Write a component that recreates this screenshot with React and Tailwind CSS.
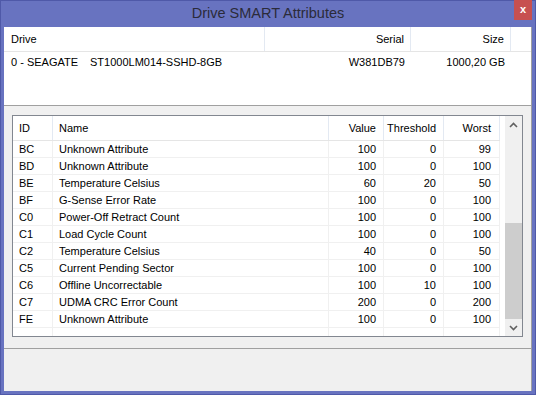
import React from "react";

const attributes = [
  { id: "BC", name: "Unknown Attribute", value: 100, threshold: 0, worst: 99 },
  { id: "BD", name: "Unknown Attribute", value: 100, threshold: 0, worst: 100 },
  { id: "BE", name: "Temperature Celsius", value: 60, threshold: 20, worst: 50 },
  { id: "BF", name: "G-Sense Error Rate", value: 100, threshold: 0, worst: 100 },
  { id: "C0", name: "Power-Off Retract Count", value: 100, threshold: 0, worst: 100 },
  { id: "C1", name: "Load Cycle Count", value: 100, threshold: 0, worst: 100 },
  { id: "C2", name: "Temperature Celsius", value: 40, threshold: 0, worst: 50 },
  { id: "C5", name: "Current Pending Sector", value: 100, threshold: 0, worst: 100 },
  { id: "C6", name: "Offline Uncorrectable", value: 100, threshold: 10, worst: 100 },
  { id: "C7", name: "UDMA CRC Error Count", value: 200, threshold: 0, worst: 200 },
  { id: "FE", name: "Unknown Attribute", value: 100, threshold: 0, worst: 100 },
];

const Chevron = ({ up }) => (
  <svg width="9" height="6" viewBox="0 0 9 6" className="text-[#606060]">
    <polyline
      points={up ? "1,5 4.5,1.5 8,5" : "1,1 4.5,4.5 8,1"}
      fill="none"
      stroke="currentColor"
      strokeWidth="1.6"
    />
  </svg>
);

const App = () => {
  return (
    <div
      className="w-[536px] h-[395px] bg-[#6873c0] border border-[#4f59a8] flex flex-col text-black"
      style={{ fontFamily: '"Liberation Sans", Arial, sans-serif' }}
    >
      {/* title bar */}
      <div className="h-[26px] relative flex items-center justify-center shrink-0">
        <span className="text-[14.5px] text-[#2b2b3a] -mt-[1px]">Drive SMART Attributes</span>
        <div className="absolute right-[3px] -top-[1px] w-[18px] h-[20px] bg-[#c75050] flex items-center justify-center">
          <span className="text-white text-[11px] font-bold leading-none -mt-[2px]">x</span>
        </div>
      </div>

      {/* client area */}
      <div className="flex-1 ml-[3px] mr-[3px] mb-[3px] bg-[#f0f0f0] border-r border-[#a0a0a0] flex flex-col text-[11px]">
        {/* drive list */}
        <div className="h-[79px] bg-white border-b border-[#a0a0a0] shrink-0">
          <div className="flex h-[25px] border-b border-[#e5e5e5]">
            <div className="w-[261px] pl-[7px] pt-[1px] flex items-center border-r border-[#e3e9f2]">Drive</div>
            <div className="w-[146px] pr-[6px] pt-[1px] flex items-center justify-end border-r border-[#e3e9f2]">Serial</div>
            <div className="w-[100px] pr-[6px] pt-[1px] flex items-center justify-end border-r border-[#e3e9f2]">Size</div>
            <div className="flex-1" />
          </div>
          <div className="flex h-[20px] items-center">
            <div className="w-[261px] pl-[7px] flex">
              <span className="w-[79px]">0 - SEAGATE</span>
              <span>ST1000LM014-SSHD-8GB</span>
            </div>
            <div className="w-[146px] pr-[6px] text-right">W381DB79</div>
            <div className="w-[100px] pr-[6px] text-right">1000,20 GB</div>
          </div>
        </div>

        {/* attributes list */}
        <div className="mt-[9px] ml-[8px] w-[511px] h-[222px] bg-white border border-[#828790] flex shrink-0">
          <div className="w-[487px] flex flex-col">
            <div className="grid grid-cols-[40px_276px_55px_60px_56px] h-[25px] border-b border-[#e5e5e5] shrink-0">
              <div className="pl-[6px] pt-[1px] flex items-center border-r border-[#e3e9f2]">ID</div>
              <div className="pl-[6px] pt-[1px] flex items-center border-r border-[#e3e9f2]">Name</div>
              <div className="pr-[7px] pt-[1px] flex items-center justify-end border-r border-[#e3e9f2]">Value</div>
              <div className="pr-[7px] pt-[1px] flex items-center justify-end border-r border-[#e3e9f2]">Threshold</div>
              <div className="pr-[8px] pt-[1px] flex items-center justify-end border-r border-[#e3e9f2]">Worst</div>
            </div>
            {attributes.map((a) => (
              <div
                key={a.id}
                className="grid grid-cols-[40px_276px_55px_60px_56px] h-[17px] border-b border-[#f0f0f0] leading-[17px]"
              >
                <div className="pl-[6px] border-r border-[#f0f0f0]">{a.id}</div>
                <div className="pl-[6px] border-r border-[#f0f0f0]">{a.name}</div>
                <div className="pr-[7px] text-right border-r border-[#f0f0f0]">{a.value}</div>
                <div className="pr-[7px] text-right border-r border-[#f0f0f0]">{a.threshold}</div>
                <div className="pr-[8px] text-right border-r border-[#f0f0f0]">{a.worst}</div>
              </div>
            ))}
            <div className="grid grid-cols-[40px_276px_55px_60px_56px] flex-1">
              <div className="border-r border-[#f0f0f0]" />
              <div className="border-r border-[#f0f0f0]" />
              <div className="border-r border-[#f0f0f0]" />
              <div className="border-r border-[#f0f0f0]" />
              <div className="border-r border-[#f0f0f0]" />
            </div>
          </div>
          <div className="flex-1" />
          {/* scrollbar */}
          <div className="w-[17px] bg-[#f0f0f0] flex flex-col">
            <div className="h-[17px] flex items-center justify-center">
              <Chevron up />
            </div>
            <div className="flex-1 flex flex-col justify-end">
              <div className="h-[96px] bg-[#cdcdcd]" />
            </div>
            <div className="h-[17px] flex items-center justify-center">
              <Chevron />
            </div>
          </div>
        </div>

        {/* status area */}
        <div className="mt-[11px] flex-1 border-t border-[#a0a0a0]" />
      </div>
    </div>
  );
};

export default App;
